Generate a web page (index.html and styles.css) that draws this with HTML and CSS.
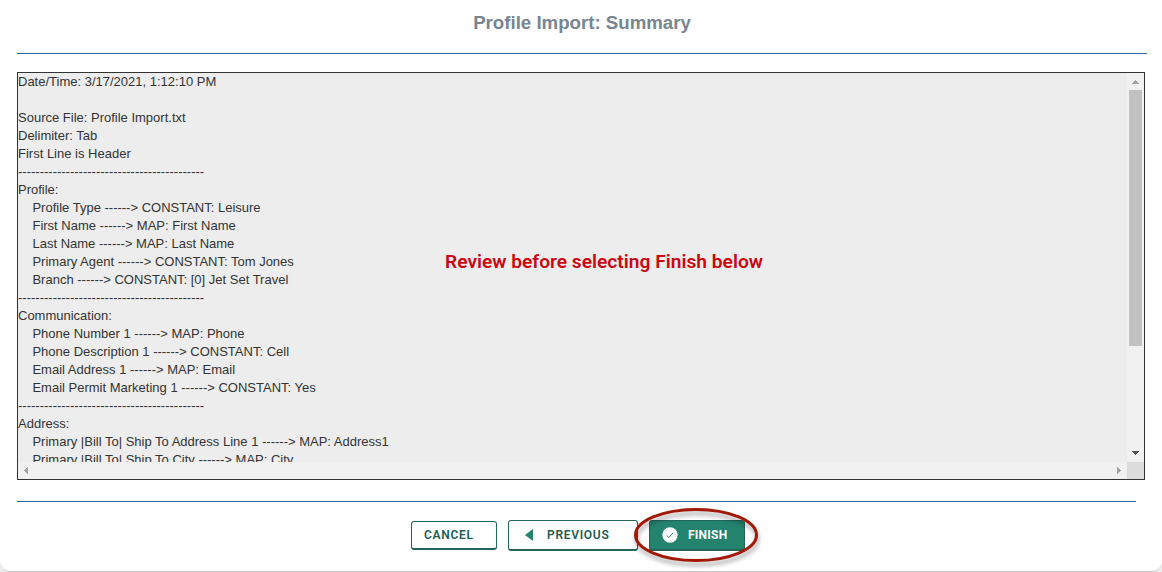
FILE: index.html
```html
<!DOCTYPE html>
<html lang="en">
<head>
<meta charset="utf-8">
<title>Profile Import: Summary</title>
<link rel="stylesheet" href="styles.css">
</head>
<body>
<main class="dialog">
  <h1 class="title">Profile Import: Summary</h1>
  <section class="summary">
    <pre class="report">Date/Time: 3/17/2021, 1:12:10 PM

Source File: Profile Import.txt
Delimiter: Tab
First Line is Header
-------------------------------------------
Profile:
    Profile Type ------&gt; CONSTANT: Leisure
    First Name ------&gt; MAP: First Name
    Last Name ------&gt; MAP: Last Name
    Primary Agent ------&gt; CONSTANT: Tom Jones
    Branch ------&gt; CONSTANT: [0] Jet Set Travel
-------------------------------------------
Communication:
    Phone Number 1 ------&gt; MAP: Phone
    Phone Description 1 ------&gt; CONSTANT: Cell
    Email Address 1 ------&gt; MAP: Email
    Email Permit Marketing 1 ------&gt; CONSTANT: Yes
-------------------------------------------
Address:
    Primary |Bill To| Ship To Address Line 1 ------&gt; MAP: Address1
    Primary |Bill To| Ship To City ------&gt; MAP: City</pre>
    <div class="vbar">
      <svg class="arrow" width="17" height="17" shape-rendering="crispEdges"><path d="M5 11L8.5 7L12 11Z" fill="#a3a3a3"/></svg>
      <div class="thumb"></div>
      <svg class="arrow" width="17" height="17" shape-rendering="crispEdges"><path d="M5 6L8.5 10L12 6Z" fill="#505050"/></svg>
    </div>
    <div class="hbar">
      <svg class="arrow" width="17" height="17" shape-rendering="crispEdges"><path d="M10 5L6 8.5L10 12Z" fill="#a3a3a3"/></svg>
      <svg class="arrow" width="17" height="17" shape-rendering="crispEdges"><path d="M7 5L11 8.5L7 12Z" fill="#a3a3a3"/></svg>
    </div>
    <div class="corner"></div>
    <p class="note">Review before selecting Finish below</p>
  </section>
  <footer class="actions">
    <button class="btn cancel">CANCEL</button>
    <button class="btn previous"><svg width="8" height="12"><path d="M8 0V12L0 6Z" fill="#23836d"/></svg>PREVIOUS</button>
    <div class="finish-wrap">
      <button class="btn finish"><svg width="16" height="16"><circle cx="8" cy="8" r="7.7" fill="#fff"/><path d="M4.7 8.5L6.8 10.5L11.2 5.8" fill="none" stroke="#23836d"/></svg>FINISH</button>
      <svg class="ring" width="136" height="66"><ellipse cx="66" cy="31" rx="60.5" ry="25.5" fill="none" stroke="#a11a08" stroke-width="3"/></svg>
    </div>
  </footer>
</main>
</body>
</html>
```
FILE: styles.css
```css
* { box-sizing: border-box; }
body {
  margin: 0;
  background: #ededed;
  font-family: "Liberation Sans", Arial, sans-serif;
  overflow: hidden;
}
.dialog {
  height: 572px;
  padding-left: 17px;
  background: #fff;
  border-bottom: 1px solid #c8c8c8;
  border-radius: 0 0 10px 10px;
}
.title {
  width: 1130px;
  height: 54px;
  margin: 0 0 18px;
  padding-top: 11px;
  border-bottom: 1px solid #336699;
  color: #788591;
  font-size: 18.67px;
  line-height: 23px;
  text-align: center;
}
.summary {
  position: relative;
  display: grid;
  grid-template: 389px 17px / 1fr 17px;
  width: 1128px;
  height: 408px;
  border: 1px solid #333;
  background: #ededed;
}
.report {
  margin: 0;
  overflow: hidden;
  font: 13px/18px "Liberation Sans", Arial, sans-serif;
  color: #333;
}
.vbar, .hbar {
  display: flex;
  background: #f1f1f1;
}
.vbar { flex-direction: column; }
.hbar { justify-content: space-between; }
.arrow { display: block; }
.thumb {
  width: 13px;
  height: 256px;
  margin: 0 2px auto;
  background: #c1c1c1;
}
.corner { background: #dcdcdc; }
.note {
  position: absolute;
  left: 427px;
  top: 177px;
  margin: 0;
  color: #cc0710;
  font: 600 19.2px/24px Roboto, sans-serif;
  white-space: nowrap;
}
.actions {
  display: flex;
  align-items: center;
  gap: 11px;
  width: 1119px;
  height: 68px;
  margin-top: 21px;
  padding-left: 394px;
  border-top: 1px solid #336699;
}
.btn {
  display: flex;
  align-items: center;
  height: 31px;
  padding: 0 0 1px;
  border: 1px solid #23655a;
  border-bottom-width: 2px;
  border-radius: 3px;
  background: #fff;
  color: #1b5e52;
  font: 600 12px/16px Roboto, sans-serif;
  letter-spacing: 0.7px;
}
.cancel { width: 86px; height: 29px; padding-left: 12px; }
.previous { width: 130px; padding-left: 16px; gap: 14px; }
.finish-wrap { position: relative; }
.finish {
  width: 96px;
  padding-left: 12px;
  gap: 10px;
  background: #23836d;
  color: #fff;
  font-weight: 700;
  letter-spacing: 0.25px;
}
.ring {
  position: absolute;
  left: -19px;
  top: -16px;
  filter: drop-shadow(1px 4px 2px rgba(0, 0, 0, 0.35));
}
```
